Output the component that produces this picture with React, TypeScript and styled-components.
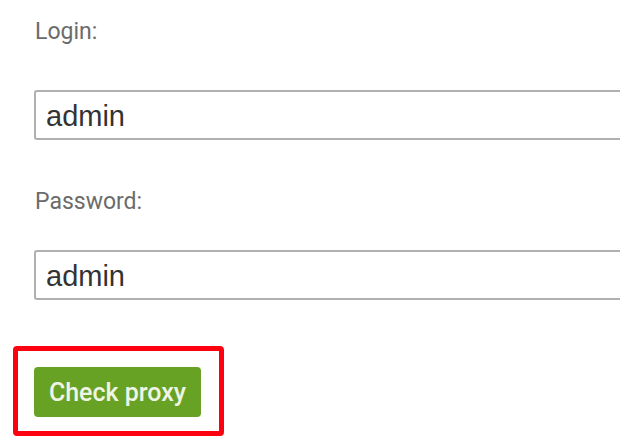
import React from "react";
import styled, { createGlobalStyle } from "styled-components";

const Global = createGlobalStyle`
  html, body { margin: 0; padding: 0; background: #ffffff; }
  body { width: 620px; height: 443px; overflow: hidden; }
`;

const Page = styled.div`
  display: flex;
  flex-direction: column;
  padding: 19px 0 0 34px;
  width: 620px;
  box-sizing: border-box;
`;

const Field = styled.div<{ $gap: number }>`
  display: flex;
  flex-direction: column;
  margin-bottom: ${(p) => p.$gap}px;
`;

const Label = styled.label<{ $space: number }>`
  font-family: Roboto, "Liberation Sans", sans-serif;
  font-size: 23px;
  line-height: 26px;
  color: #6b6b6b;
  padding-left: 1px;
  margin-bottom: ${(p) => p.$space}px;
`;

const Input = styled.input`
  box-sizing: border-box;
  width: 586px;
  height: 50px;
  border: 2px solid #b0b0b0;
  border-right: none;
  border-radius: 3px 0 0 3px;
  padding: 2px 0 0 10px;
  font-family: "Liberation Sans", Arial, sans-serif;
  font-size: 29px;
  color: #333333;
  background: #ffffff;
  outline: none;
`;

const Highlight = styled.div`
  align-self: flex-start;
  margin-left: -21px;
  border: 5px solid #ff0010;
  border-radius: 4px;
  padding: 16px 18px 14px 16px;
`;

const Button = styled.button`
  display: flex;
  align-items: center;
  justify-content: center;
  width: 167px;
  height: 50px;
  border: none;
  border-radius: 4px;
  background: #68a224;
  color: #eef5e6;
  font-family: Roboto, "Liberation Sans", sans-serif;
  font-weight: 500;
  font-size: 25px;
  padding: 0;
`;

export default function App() {
  return (
    <>
      <Global />
      <Page>
        <Field $gap={49}>
          <Label $space={45}>Login:</Label>
          <Input defaultValue="admin" />
        </Field>
        <Field $gap={46}>
          <Label $space={35}>Password:</Label>
          <Input defaultValue="admin" />
        </Field>
        <Highlight>
          <Button>Check proxy</Button>
        </Highlight>
      </Page>
    </>
  );
}
